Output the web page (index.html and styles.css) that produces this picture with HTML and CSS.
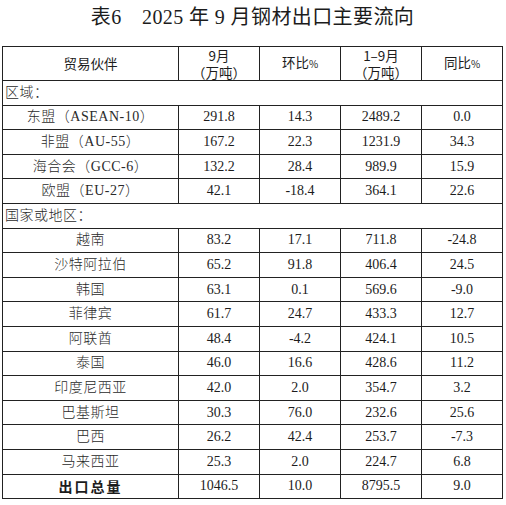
FILE: index.html
```html
<!DOCTYPE html>
<html lang="zh-CN">
<head>
    <meta charset="UTF-8">
    <title>表6 2025年9月钢材出口主要流向</title>
    <link rel="stylesheet" href="styles.css">
</head>
<body>
    <div class="page">
        <h1 class="title">表6　2025 年 9 月钢材出口主要流向</h1>
        <table class="flow">
            <colgroup>
                <col class="c-name">
                <col class="c-num">
                <col class="c-num">
                <col class="c-num">
                <col class="c-num">
            </colgroup>
            <thead>
                <tr>
                    <th>贸易伙伴</th>
                    <th>9月<br>（万吨）</th>
                    <th>环比<span class="pct">%</span></th>
                    <th>1–9月<br>（万吨）</th>
                    <th>同比<span class="pct">%</span></th>
                </tr>
            </thead>
            <tbody>
                <tr class="group"><td colspan="5">区域：</td></tr>
                <tr><td>东盟（ASEAN-10）</td><td>291.8</td><td>14.3</td><td>2489.2</td><td>0.0</td></tr>
                <tr><td>非盟（AU-55）</td><td>167.2</td><td>22.3</td><td>1231.9</td><td>34.3</td></tr>
                <tr><td>海合会（GCC-6）</td><td>132.2</td><td>28.4</td><td>989.9</td><td>15.9</td></tr>
                <tr><td>欧盟（EU-27）</td><td>42.1</td><td>-18.4</td><td>364.1</td><td>22.6</td></tr>
                <tr class="group"><td colspan="5">国家或地区：</td></tr>
                <tr><td>越南</td><td>83.2</td><td>17.1</td><td>711.8</td><td>-24.8</td></tr>
                <tr><td>沙特阿拉伯</td><td>65.2</td><td>91.8</td><td>406.4</td><td>24.5</td></tr>
                <tr><td>韩国</td><td>63.1</td><td>0.1</td><td>569.6</td><td>-9.0</td></tr>
                <tr><td>菲律宾</td><td>61.7</td><td>24.7</td><td>433.3</td><td>12.7</td></tr>
                <tr><td>阿联酋</td><td>48.4</td><td>-4.2</td><td>424.1</td><td>10.5</td></tr>
                <tr><td>泰国</td><td>46.0</td><td>16.6</td><td>428.6</td><td>11.2</td></tr>
                <tr><td>印度尼西亚</td><td>42.0</td><td>2.0</td><td>354.7</td><td>3.2</td></tr>
                <tr><td>巴基斯坦</td><td>30.3</td><td>76.0</td><td>232.6</td><td>25.6</td></tr>
                <tr><td>巴西</td><td>26.2</td><td>42.4</td><td>253.7</td><td>-7.3</td></tr>
                <tr><td>马来西亚</td><td>25.3</td><td>2.0</td><td>224.7</td><td>6.8</td></tr>
                <tr class="total"><td>出口总量</td><td>1046.5</td><td>10.0</td><td>8795.5</td><td>9.0</td></tr>
            </tbody>
        </table>
    </div>
</body>
</html>
```

FILE: styles.css
```css
body {
    margin: 0;
    background-color: #fff;
    color: #1c1c1c;
    font-family: "Liberation Serif", "Noto Sans CJK SC", serif;
}
.page {
    padding: 0 3px 0 2px;
}
.title {
    margin: 0;
    height: 46px;
    padding-top: 4px;
    box-sizing: border-box;
    font-size: 20px;
    font-weight: normal;
    line-height: 26px;
    letter-spacing: 0.4px;
    text-align: center;
}
.flow {
    width: 501px;
    border-collapse: collapse;
    table-layout: fixed;
}
.c-name {
    width: 176px;
}
.c-num {
    width: 81px;
}
.flow th,
.flow td {
    border: 1px solid #222;
    padding: 0;
    text-align: center;
    vertical-align: middle;
}
.flow th {
    height: 33px;
    font-family: "Noto Sans CJK SC", sans-serif;
    font-size: 13.5px;
    font-weight: normal;
    line-height: 16.5px;
}
.pct {
    font-size: 10px;
}
.flow td {
    height: 23.6px;
    font-size: 14px;
    line-height: 16px;
}
.flow td:first-child {
    font-weight: 300;
    letter-spacing: 0.5px;
    color: #2a2a2a;
}
.group td {
    text-align: left;
    padding-left: 2px;
}
.total td:first-child {
    font-family: "Noto Sans CJK SC", sans-serif;
    font-weight: bold;
    letter-spacing: 2px;
    color: #1c1c1c;
}
```
